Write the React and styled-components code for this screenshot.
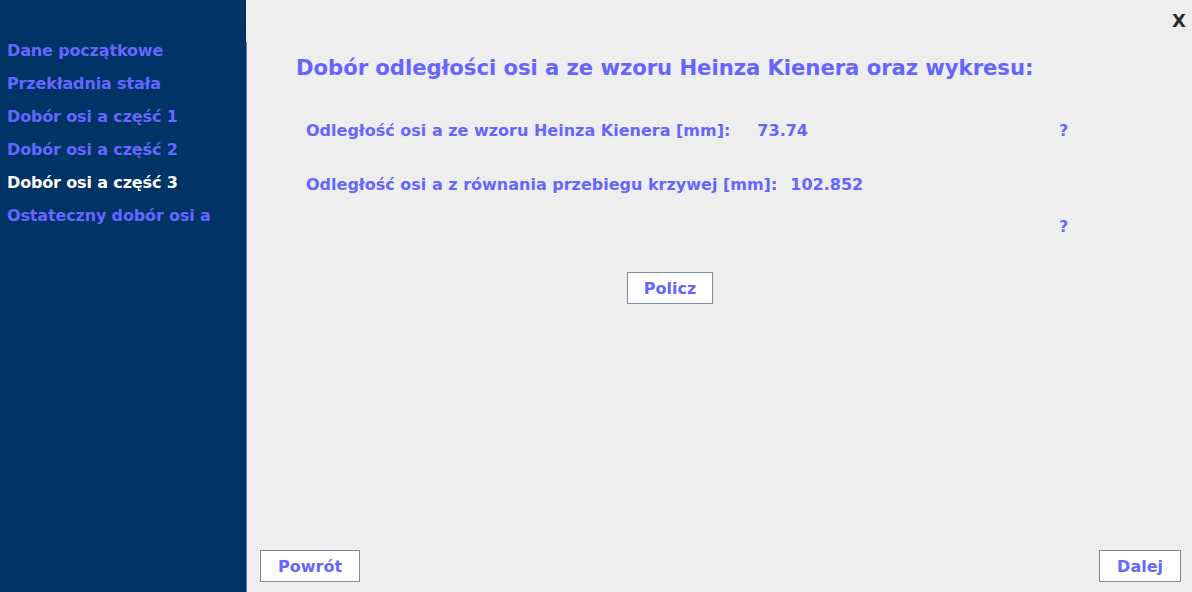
import styled, { createGlobalStyle } from "styled-components";

const GlobalStyle = createGlobalStyle`
  html, body, #root {
    height: 100%;
  }
  body {
    margin: 0;
    background: #eeeeee;
    font-family: "DejaVu Sans", Verdana, sans-serif;
    font-weight: bold;
    color: #6666ff;
  }
`;

const Shell = styled.div`
  display: flex;
  height: 100vh;
  overflow: hidden;
`;

const Sidebar = styled.nav`
  width: 246px;
  flex-shrink: 0;
  background: #003366;
  padding: 34px 0 0 7px;
  box-sizing: border-box;
  display: flex;
  flex-direction: column;
`;

const NavItem = styled.div`
  font-size: 16px;
  line-height: 33px;
  letter-spacing: -0.15px;
  white-space: nowrap;
  color: ${(p) => (p.$active ? "#ffffff" : "#6666ff")};
`;

const Main = styled.main`
  flex: 1;
  display: flex;
  flex-direction: column;
`;

const TopBar = styled.div`
  height: 42px;
  display: flex;
  justify-content: flex-end;
  align-items: flex-start;
  padding: 12px 6px 0 0;
  box-sizing: border-box;
`;

const CloseX = styled.span`
  font-size: 18px;
  line-height: 18px;
  color: #2b2b2b;
  cursor: pointer;
`;

const Body = styled.section`
  flex: 1;
  display: flex;
  flex-direction: column;
  border-left: 1px solid #5577bb;
  padding: 0 11px 10px 13px;
`;

const Content = styled.div`
  flex: 1;
  width: 748px;
  margin-left: 36px;
  display: flex;
  flex-direction: column;
`;

const Title = styled.h1`
  margin: 13px 0 0;
  font-size: 21.2px;
  line-height: 26px;
  letter-spacing: -0.06px;
  white-space: nowrap;
`;

const Row = styled.div`
  display: grid;
  grid-template-columns: 753px auto;
  margin: ${(p) => p.$top}px 0 0 10px;
  font-size: 16px;
  line-height: 20px;
  white-space: nowrap;
`;

const Pair = styled.div`
  display: flex;
  gap: ${(p) => p.$gap}px;
`;

const Help = styled.span`
  cursor: help;
`;

const Button = styled.button`
  height: 32px;
  padding: 0 17px;
  background: #ffffff;
  border: 1px solid #7d8c9c;
  border-radius: 0;
  font-family: inherit;
  font-weight: bold;
  font-size: 16px;
  color: #6666ff;
  cursor: pointer;
`;

const CenterButton = styled(Button)`
  align-self: center;
  margin-top: 35px;
  padding: 0 16px;
`;

const Footer = styled.div`
  display: flex;
  justify-content: space-between;
`;

const steps = [
  "Dane początkowe",
  "Przekładnia stała",
  "Dobór osi a część 1",
  "Dobór osi a część 2",
  "Dobór osi a część 3",
  "Ostateczny dobór osi a",
];

export default function App() {
  const active = 4;

  return (
    <Shell>
      <GlobalStyle />
      <Sidebar>
        {steps.map((s, i) => (
          <NavItem key={s} $active={i === active}>
            {s}
          </NavItem>
        ))}
      </Sidebar>
      <Main>
        <TopBar>
          <CloseX>X</CloseX>
        </TopBar>
        <Body>
          <Content>
            <Title>Dobór odległości osi a ze wzoru Heinza Kienera oraz wykresu:</Title>
            <Row $top={40}>
              <Pair $gap={27}>
                <span>Odległość osi a ze wzoru Heinza Kienera [mm]:</span>
                <span>73.74</span>
              </Pair>
              <Help>?</Help>
            </Row>
            <Row $top={34}>
              <Pair $gap={13}>
                <span>Odległość osi a z równania przebiegu krzywej [mm]:</span>
                <span>102.852</span>
              </Pair>
            </Row>
            <Row $top={22}>
              <span />
              <Help>?</Help>
            </Row>
            <CenterButton>Policz</CenterButton>
          </Content>
          <Footer>
            <Button>Powrót</Button>
            <Button>Dalej</Button>
          </Footer>
        </Body>
      </Main>
    </Shell>
  );
}
